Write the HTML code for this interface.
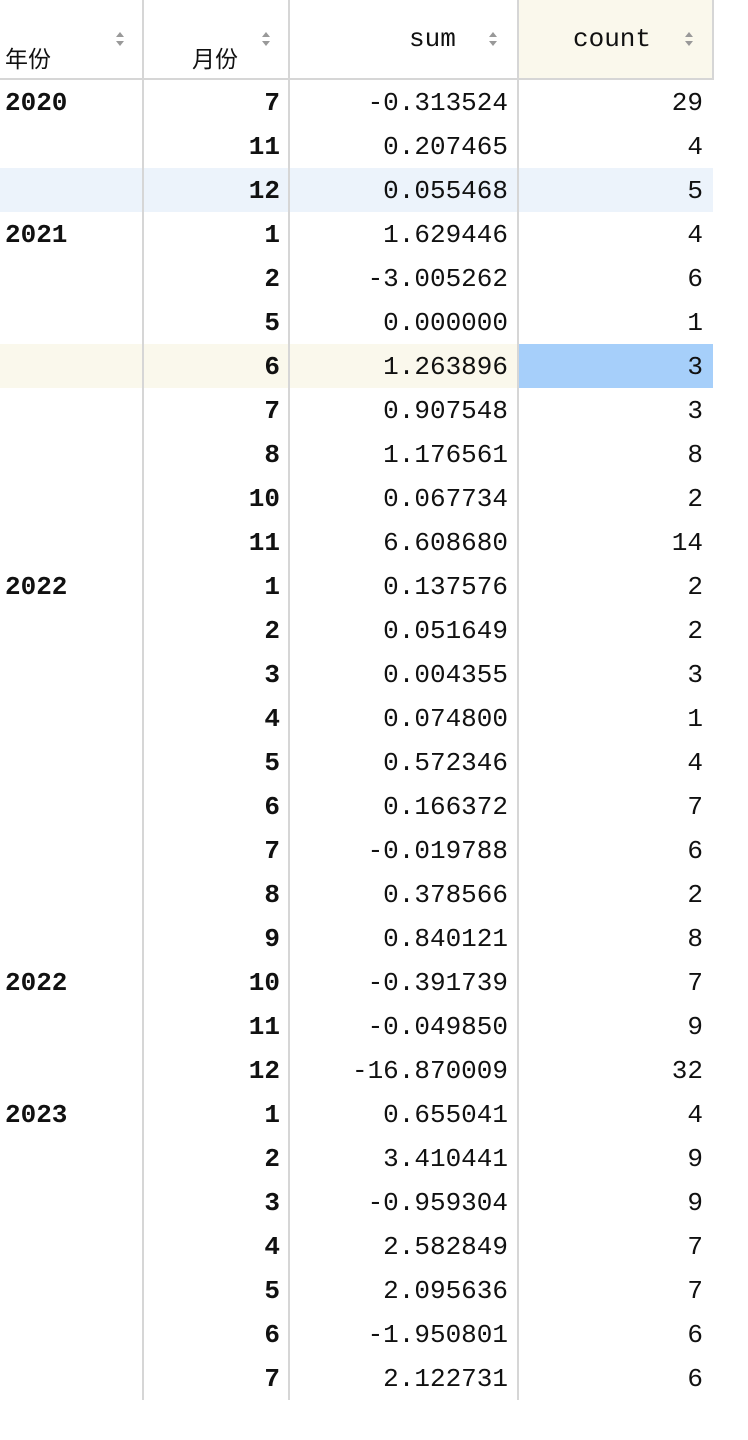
<!DOCTYPE html><html><head><style>
body{margin:0;width:748px;height:1440px;background:#fff;font-family:"Liberation Mono","DejaVu Sans Mono",monospace;font-size:26px;color:#111;position:relative;overflow:hidden}
.vl{position:absolute;top:0;width:2px;background:#d6d6d6;height:1400px}
.hd{position:absolute;top:0;height:78px;border-bottom:2px solid #d6d6d6}
.r{position:absolute;left:0;width:713px;height:44px}
.c{position:absolute;top:1px;height:44px;line-height:44px;white-space:pre}
.arr{position:absolute;width:9px;height:14px}
.arr:before,.arr:after{content:"";position:absolute;left:0;border-left:4px solid transparent;border-right:4px solid transparent}
.arr:before{top:0;border-bottom:5px solid #999}
.arr:after{bottom:0;border-top:5px solid #999}
</style></head><body>
<div class="hd" style="left:0;width:713px"></div>
<div style="position:absolute;left:519px;top:0;width:194px;height:78px;background:#faf8ec"></div>
<div style="position:absolute;left:5px;top:40px;font-family:'Noto Sans CJK SC',sans-serif;font-size:23px">年份</div>
<div style="position:absolute;left:192px;top:40px;font-family:'Noto Sans CJK SC',sans-serif;font-size:23px">月份</div>
<div style="position:absolute;left:409px;top:24px">sum</div>
<div style="position:absolute;left:573px;top:24px">count</div>
<div class="arr" style="left:116px;top:32px"></div>
<div class="arr" style="left:262px;top:32px"></div>
<div class="arr" style="left:489px;top:32px"></div>
<div class="arr" style="left:685px;top:32px"></div>
<div style="position:absolute;left:0;top:168px;width:713px;height:44px;background:#ecf3fb"></div>
<div style="position:absolute;left:0;top:344px;width:519px;height:44px;background:#faf8ec"></div>
<div style="position:absolute;left:519px;top:344px;width:194px;height:44px;background:#a6cffa"></div>
<div class="vl" style="left:142px"></div><div class="vl" style="left:288px"></div><div class="vl" style="left:517px"></div><div class="vl" style="left:712px;height:80px"></div>
<div id="rows"></div>
<script>
var d=[["2020",7,"-0.313524",29],["",11,"0.207465",4],["",12,"0.055468",5],["2021",1,"1.629446",4],["",2,"-3.005262",6],["",5,"0.000000",1],["",6,"1.263896",3],["",7,"0.907548",3],["",8,"1.176561",8],["",10,"0.067734",2],["",11,"6.608680",14],["2022",1,"0.137576",2],["",2,"0.051649",2],["",3,"0.004355",3],["",4,"0.074800",1],["",5,"0.572346",4],["",6,"0.166372",7],["",7,"-0.019788",6],["",8,"0.378566",2],["",9,"0.840121",8],["2022",10,"-0.391739",7],["",11,"-0.049850",9],["",12,"-16.870009",32],["2023",1,"0.655041",4],["",2,"3.410441",9],["",3,"-0.959304",9],["",4,"2.582849",7],["",5,"2.095636",7],["",6,"-1.950801",6],["",7,"2.122731",6]];
var h="";d.forEach(function(r,i){var t=80+i*44;h+='<div class="r" style="top:'+t+'px"><div class="c" style="left:5px;font-weight:bold">'+r[0]+'</div><div class="c" style="right:433px;font-weight:bold">'+r[1]+'</div><div class="c" style="right:205px">'+r[2]+'</div><div class="c" style="right:10px">'+r[3]+'</div></div>';});
document.getElementById("rows").innerHTML=h;
</script>
</body></html>
